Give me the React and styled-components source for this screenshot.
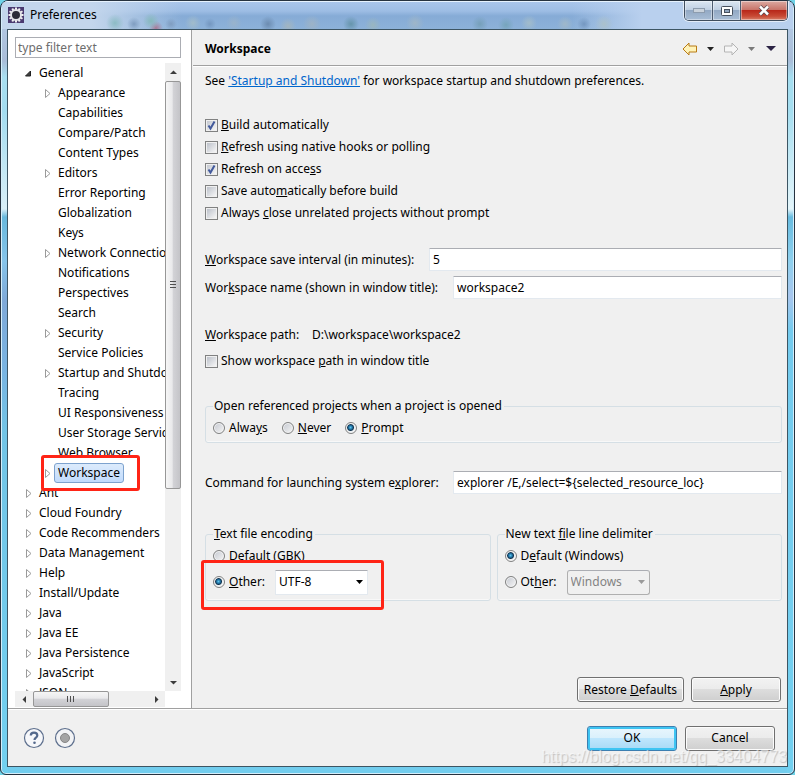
import React from "react";
import styled, { createGlobalStyle } from "styled-components";

const GlobalStyle = createGlobalStyle`
  * {
    box-sizing: border-box;
  }
  body {
    margin: 0;
    background: #6fd3e8;
  }
  body, button, input, select {
    font-family: "Noto Sans", "Noto Sans CJK SC", sans-serif;
    font-size: 12px;
    line-height: 20px;
    color: #000;
  }
`;

const Dialog = styled.div`
  position: relative;
  display: flex;
  flex-direction: column;
  height: 100vh;
  padding: 0 6px 7px;
  border: 1px solid #26323f;
  border-radius: 8px 8px 6px 6px;
  box-shadow: inset 0 0 0 1px #d5eefa;
  overflow: hidden;
  background:
    linear-gradient(to bottom, #b9cfe9 0, #a9bdd8 60px, #a9dff0 76px, #a3dcf0 110px, #d9eff7 208px, #68b8dc 216px, #86c4ea 260px, #7fa9d8 300px, #79b4e2 370px, #72c4e6 430px, #72d0f0 100%) left / 7px 100% no-repeat,
    linear-gradient(to bottom, #b9d0ea 0, #a9bdd8 60px, #a5def0 76px, #a5def0 110px, #e4f5fa 208px, #68bce0 216px, #8ed0ee 260px, #a8c6ee 296px, #74cbee 330px, #72d0f0 100%) right / 7px 100% no-repeat,
    #72cdee;
`;

const TitleBar = styled.header`
  display: flex;
  align-items: flex-start;
  flex: none;
  height: 28px;
  margin: 0 -5px;
  padding-left: 6px;
  border-top: 1px solid #e6f2fd;
  background:
    radial-gradient(circle at 113px 21px, #8cbcc4 0, transparent 9px),
    radial-gradient(circle at 132px 22px, #7f9dc0 0, transparent 7px),
    radial-gradient(circle at 149px 19px, #86b9bc 0, transparent 8px),
    radial-gradient(circle at 154px 26px, #a87c98 0, transparent 7px),
    radial-gradient(circle at 169px 22px, #7f9dc0 0, transparent 6px),
    radial-gradient(circle at 191px 21px, #a2bccb 0, transparent 8px),
    radial-gradient(circle at 208px 22px, #7497c0 0, transparent 6px),
    radial-gradient(circle at 232px 21px, #99b3cb 0, transparent 8px),
    radial-gradient(circle at 266px 22px, #6c8cb0 0, transparent 8px),
    radial-gradient(circle at 286px 24px, #a2b5c0 0, transparent 8px),
    radial-gradient(circle at 310px 22px, #9db3c6 0, transparent 9px),
    radial-gradient(circle at 349px 22px, #6695ac 0, transparent 8px),
    radial-gradient(circle at 371px 23px, #9ab6bf 0, transparent 8px),
    radial-gradient(circle at 413px 21px, #9fb6c8 0, transparent 9px),
    radial-gradient(circle at 478px 22px, #76a0ba 0, transparent 8px),
    radial-gradient(circle at 504px 23px, #76a5bb 0, transparent 8px),
    radial-gradient(circle at 527px 21px, #a2bccb 0, transparent 8px),
    radial-gradient(circle at 563px 22px, #9fb8ca 0, transparent 8px),
    radial-gradient(circle at 582px 22px, #7497c0 0, transparent 7px),
    radial-gradient(circle at 602px 22px, #abc1cb 0, transparent 9px),
    linear-gradient(to right, #c3d6ec 0, #c3d6ec 90px, transparent 180px, transparent 570px, #b9d0ee 640px),
    linear-gradient(to bottom, #a9c5ea 0, #9dbde4 9px, #86abd6 14px, #8db2d9 100%);
`;

const Title = styled.h1`
  flex: 1;
  margin: 0;
  padding: 3px 0 0 6px;
  font-size: 12px;
  font-weight: 400;
`;

const AppIcon = styled.svg`
  flex: none;
  width: 16px;
  height: 16px;
  margin-top: 5px;
`;

const Caption = styled.div`
  display: flex;
  flex: none;
  margin: -1px 5px 0 0;
  border: 1px solid #3f4d5e;
  border-top: 0;
  border-radius: 0 0 5px 5px;
  box-shadow: 0 0 0 1px rgba(255, 255, 255, 0.6);
  overflow: hidden;
`;

const CaptionButton = styled.button`
  display: flex;
  align-items: center;
  justify-content: center;
  width: ${(props) => (props.$close ? "46px" : "28px")};
  height: 19px;
  padding: 0;
  border: 0;
  border-right: ${(props) => (props.$close ? "0" : "1px solid #4d5c70")};
  background: ${(props) =>
    props.$close
      ? "linear-gradient(#dcaaa2 0, #c9756a 45%, #b8281a 50%, #c84a35 80%, #d8806a 100%)"
      : "linear-gradient(#dbe6f2 0, #c0d0e3 45%, #93a9c4 50%, #a9bed6 100%)"};
  box-shadow: inset 0 0 0 1px rgba(255, 255, 255, 0.4);
`;

const Client = styled.main`
  display: flex;
  flex: 1;
  flex-direction: column;
  min-height: 0;
  border: 1px solid #3d5563;
  background: #f0f0f0;
`;

const Columns = styled.div`
  display: flex;
  flex: 1;
  min-height: 0;
  border-bottom: 1px solid #a0a0a0;
`;

const Sidebar = styled.nav`
  display: flex;
  flex: none;
  flex-direction: column;
  width: 184px;
  padding: 7px 10px 1px 7px;
  border-right: 1px solid #a0a0a0;
  background: #fff;
`;

const FilterInput = styled.input`
  flex: none;
  width: 100%;
  height: 21px;
  padding: 0 2px;
  border: 1px solid #abadb3;
  &::placeholder {
    color: #6d6d6d;
    opacity: 1;
  }
`;

const TreeArea = styled.div`
  display: grid;
  flex: 1;
  grid-template-columns: minmax(0, 1fr) 16px;
  grid-template-rows: minmax(0, 1fr) 16px;
  min-height: 0;
  margin-top: 5px;
`;

const Tree = styled.ul`
  margin: 0;
  padding: 0;
  overflow: hidden;
  list-style: none;
`;

const TreeItem = styled.li`
  position: relative;
  display: flex;
  align-items: center;
  height: 20px;
  padding-left: ${(props) => (props.$level ? "29px" : "10px")};
  white-space: nowrap;
`;

const Expander = styled.svg`
  flex: none;
  width: 8px;
  height: 9px;
  margin-right: 2px;
`;

const NodeText = styled.span`
  height: 20px;
  padding: 0 3px;
  border: 1px solid ${(props) => (props.$selected ? "#7da2ce" : "transparent")};
  border-radius: 3px;
  line-height: 18px;
  background: ${(props) => (props.$selected ? "linear-gradient(#dcebfc, #c1dbfc)" : "none")};
`;

const RedBox = styled.div`
  position: absolute;
  z-index: 2;
  top: ${(props) => props.$top};
  left: ${(props) => props.$left};
  width: ${(props) => props.$width};
  height: ${(props) => props.$height};
  border: 3px solid #ff2416;
  border-radius: 3px;
  pointer-events: none;
`;

const ScrollTrack = styled.div`
  display: flex;
  flex-direction: ${(props) => (props.$horizontal ? "row" : "column")};
  background: #f0f0f0;
`;

const ScrollArrow = styled.button`
  display: flex;
  align-items: center;
  justify-content: center;
  flex: none;
  width: ${(props) => (props.$horizontal ? "18px" : "16px")};
  height: ${(props) => (props.$horizontal ? "16px" : "18px")};
  padding: 0;
  border: 0;
  background: none;
`;

const ScrollThumb = styled.div`
  display: flex;
  align-items: center;
  justify-content: center;
  flex: ${(props) => props.$share} 1 0;
  border: 1px solid #979797;
  border-radius: 2px;
  background: linear-gradient(
    ${(props) => (props.$horizontal ? "to bottom" : "to right")},
    #f6f6f6 0,
    #e9e9eb 45%,
    #d3d3d7 50%,
    #c4c4c8 100%
  );
`;

const ScrollRest = styled.div`
  flex: ${(props) => props.$share} 1 0;
`;

const Page = styled.section`
  display: flex;
  flex: 1;
  flex-direction: column;
  min-width: 0;
  margin-left: 1px;
`;

const PageHeader = styled.div`
  display: flex;
  align-items: center;
  justify-content: space-between;
  flex: none;
  height: 36px;
  padding: 2px 9px 0 12px;
  border-bottom: 1px solid #a0a0a0;
  box-shadow: 0 1px 0 #fff;
`;

const PageTitle = styled.h2`
  margin: 0;
  font-size: 12px;
  font-weight: 700;
`;

const NavTools = styled.div`
  display: flex;
  align-items: center;
  gap: 9px;
`;

const ToolButton = styled.button`
  display: flex;
  padding: 0;
  border: 0;
  background: none;
`;

const PageBody = styled.div`
  display: flex;
  flex: 1;
  flex-direction: column;
  min-height: 0;
  padding: 5px 5px 6px 12px;
`;

const Intro = styled.p`
  margin: 0 0 24px;
`;

const Link = styled.a`
  color: #0066cc;
`;

const Stack = styled.div`
  display: flex;
  flex-direction: column;
  gap: 2px;
  margin-bottom: 25px;
`;

const CheckLabel = styled.label`
  display: flex;
  align-items: center;
  gap: 3px;
`;

const CheckInput = styled.input`
  appearance: none;
  flex: none;
  width: 13px;
  height: 13px;
  margin: 0;
  border: 1px solid #808181;
  background: linear-gradient(135deg, #bcc1ca, #f6f6f6) content-box;
  padding: 1px;
  &:checked {
    background:
      url("data:image/svg+xml,%3Csvg xmlns='http://www.w3.org/2000/svg' width='11' height='11'%3E%3Cpath d='M2.5 5.5 4.500 8.500 8.500 1.500' fill='none' stroke='%23435a9c' stroke-width='2'/%3E%3C/svg%3E")
        border-box center / 11px 11px no-repeat,
      linear-gradient(135deg, #c4c8d0, #f6f6f6) content-box;
  }
`;

const RadioInput = styled.input`
  appearance: none;
  flex: none;
  width: 12px;
  height: 12px;
  margin: 0 1px 0 0;
  border: 1px solid #808181;
  border-radius: 50%;
  background: linear-gradient(135deg, #c4c8d0, #f6f6f6);
  box-shadow: inset 0 0 0 1px #f4f4f4;
  &:checked {
    background: radial-gradient(circle at 45% 45%, #5cc6f0 0, #1d6c9c 2px, #12344f 3px, #e8eef2 4px, #f4f4f4 5px);
  }
`;

const Field = styled.div`
  display: flex;
  align-items: center;
  gap: 8px;
  margin-bottom: ${(props) => props.$after || "0"};
`;

const FieldLabel = styled.label`
  flex: none;
  min-width: ${(props) => props.$width};
`;

const TextInput = styled.input`
  flex: 1;
  min-width: 0;
  height: 23px;
  padding: 0 3px;
  border: 1px solid #e3e9ef;
  border-top-color: #abadb3;
  border-radius: 1px;
`;

const PathValue = styled.output`
  white-space: pre;
`;

const Group = styled.fieldset`
  min-width: 0;
  margin: 0 0 ${(props) => props.$after || "0"};
  padding: 1px 7px 3px;
  border: 1px solid #d5dfe5;
  border-radius: 3px;
  box-shadow: inset 0 -1px 0 #f8f8f8;
`;

const Legend = styled.legend`
  padding: 0 2px 0 1px;
  line-height: 20px;
`;

const RadioRow = styled.div`
  position: relative;
  display: flex;
  align-items: center;
  gap: ${(props) => props.$gap || "10px"};
  min-height: ${(props) => (props.$tall ? "30px" : "22px")};
`;

const GroupPair = styled.div`
  display: grid;
  grid-template-columns: 1fr 1fr;
  gap: 6px;
`;

const ComboWrap = styled.div`
  position: relative;
  display: flex;
  align-items: center;
`;

const Combo = styled.select`
  appearance: none;
  width: ${(props) => props.$width};
  height: 25px;
  padding: 0 3px;
  border: 1px solid ${(props) => (props.disabled ? "#afafaf" : "#e3e9ef")};
  border-top-color: #abadb3;
  border-radius: ${(props) => (props.disabled ? "3px" : "1px")};
  background: ${(props) => (props.disabled ? "#f0f0f0" : "#fff")};
  color: ${(props) => (props.disabled ? "#838383" : "#000")};
  opacity: 1;
`;

const ComboArrow = styled.svg`
  position: absolute;
  right: 5px;
  width: 7px;
  height: 4px;
  pointer-events: none;
`;

const ButtonRow = styled.div`
  display: flex;
  justify-content: flex-end;
  gap: 7px;
  margin-top: auto;
  padding-right: 1px;
`;

const PushButton = styled.button`
  min-width: 90px;
  height: 25px;
  padding: 0 6px;
  border: ${(props) => (props.$primary ? "1px solid #3c7fb1" : "1px solid #707070")};
  border-radius: 3px;
  line-height: 20px;
  background: ${(props) =>
    props.$primary
      ? "linear-gradient(#eaf6fd 0, #d9f0fc 50%, #bee6fd 50%, #a7d9f5 100%)"
      : "linear-gradient(#f2f2f2 0, #ebebeb 50%, #dddddd 50%, #cfcfcf 100%)"};
  box-shadow: ${(props) =>
    props.$primary ? "inset 0 0 0 2px #3ec4f2" : "inset 0 0 0 1px #fcfcfc"};
`;

const Footer = styled.footer`
  display: flex;
  align-items: center;
  flex: none;
  gap: 8px;
  height: 57px;
  padding: 0 12px 0 15px;
  border-top: 1px solid #fff;
`;

const RoundButton = styled.button`
  display: flex;
  width: 22px;
  height: 22px;
  margin-right: 1px;
  padding: 0;
  border: 0;
  background: none;
`;

const Spacer = styled.div`
  flex: 1;
`;

const Watermark = styled.div`
  position: absolute;
  z-index: 3;
  right: 7px;
  bottom: 7px;
  font-family: "Liberation Sans", Arial, sans-serif;
  font-size: 16px;
  line-height: 20px;
  color: rgba(255, 255, 255, 0.55);
  text-shadow: 1px 1px 1px rgba(110, 110, 110, 0.35);
  pointer-events: none;
`;

const nodes = [
  { text: "General", open: true },
  { text: "Appearance", level: 1, children: true },
  { text: "Capabilities", level: 1 },
  { text: "Compare/Patch", level: 1 },
  { text: "Content Types", level: 1 },
  { text: "Editors", level: 1, children: true },
  { text: "Error Reporting", level: 1 },
  { text: "Globalization", level: 1 },
  { text: "Keys", level: 1 },
  { text: "Network Connections", level: 1, children: true },
  { text: "Notifications", level: 1 },
  { text: "Perspectives", level: 1 },
  { text: "Search", level: 1 },
  { text: "Security", level: 1, children: true },
  { text: "Service Policies", level: 1 },
  { text: "Startup and Shutdown", level: 1, children: true },
  { text: "Tracing", level: 1 },
  { text: "UI Responsiveness", level: 1 },
  { text: "User Storage Service", level: 1 },
  { text: "Web Browser", level: 1 },
  { text: "Workspace", level: 1, children: true, selected: true },
  { text: "Ant", children: true },
  { text: "Cloud Foundry", children: true },
  { text: "Code Recommenders", children: true },
  { text: "Data Management", children: true },
  { text: "Help", children: true },
  { text: "Install/Update", children: true },
  { text: "Java", children: true },
  { text: "Java EE", children: true },
  { text: "Java Persistence", children: true },
  { text: "JavaScript", children: true },
  { text: "JSON", children: true },
];

const teeth = [0, 30, 60, 90, 120, 150, 180, 210, 240, 270, 300, 330];

function TreeNode({ node }) {
  return (
    <TreeItem $level={node.level}>
      <Expander viewBox="0 0 8 9">
        {node.open && <path d="M5.500 2v5h-5z" fill="#404040" stroke="#222" />}
        {node.children && <path d="M1.500 0.500v8l4.500-4z" fill="#fff" stroke="#9a9a9a" />}
      </Expander>
      <NodeText $selected={node.selected}>{node.text}</NodeText>
      {node.selected && <RedBox $top="-8px" $left="26px" $width="99px" $height="36px" />}
    </TreeItem>
  );
}

function Triangle({ d, fill = "#3c3c3c" }) {
  return (
    <svg width="7" height="7" viewBox="0 0 7 7">
      <path d={d} fill={fill} />
    </svg>
  );
}

function Check({ checked, children }) {
  return (
    <CheckLabel>
      <CheckInput type="checkbox" defaultChecked={checked} />
      <span>{children}</span>
    </CheckLabel>
  );
}

function Radio({ name, checked, children }) {
  return (
    <CheckLabel>
      <RadioInput type="radio" name={name} defaultChecked={checked} />
      <span>{children}</span>
    </CheckLabel>
  );
}

function DropDown({ label, value, width, disabled }) {
  return (
    <ComboWrap>
      <Combo aria-label={label} defaultValue={value} $width={width} disabled={disabled}>
        <option>{value}</option>
      </Combo>
      <ComboArrow viewBox="0 0 7 4">
        <path d="M0 0h7L3.500 4z" fill={disabled ? "#9a9a9a" : "#000"} />
      </ComboArrow>
    </ComboWrap>
  );
}

export default function App() {
  return (
    <Dialog>
      <GlobalStyle />
      <TitleBar>
        <AppIcon viewBox="0 0 16 16">
          <rect width="16" height="16" fill="#4a3a70" />
          {teeth.map((angle) => (
            <rect key={angle} x="7" y="0.500" width="2" height="3" fill="#f2f2f2" transform={`rotate(${angle} 8 8)`} />
          ))}
          <circle cx="8" cy="8" r="5" fill="#2c2c38" stroke="#e4e4e8" strokeWidth="2" />
        </AppIcon>
        <Title>Preferences</Title>
        <Caption>
          <CaptionButton aria-label="Minimize">
            <svg width="12" height="5" viewBox="0 0 12 5">
              <rect x="0.500" y="0.500" width="11" height="4" fill="#c9d2dc" stroke="#8d9cae" />
            </svg>
          </CaptionButton>
          <CaptionButton aria-label="Maximize">
            <svg width="12" height="10" viewBox="0 0 12 10">
              <rect x="0.500" y="0.500" width="11" height="9" rx="1" fill="#fff" stroke="#46505e" />
              <rect x="3.500" y="3.500" width="5" height="3" fill="#8fa4be" stroke="#46505e" />
            </svg>
          </CaptionButton>
          <CaptionButton aria-label="Close" $close>
            <svg width="12" height="11" viewBox="0 0 12 11">
              <path d="M2 1.500 10 9.500M10 1.500 2 9.500" stroke="#5a4a52" strokeWidth="4" />
              <path d="M2 1.500 10 9.500M10 1.500 2 9.500" stroke="#fff" strokeWidth="2.500" />
            </svg>
          </CaptionButton>
        </Caption>
      </TitleBar>
      <Client>
        <Columns>
          <Sidebar>
            <FilterInput aria-label="Filter" placeholder="type filter text" />
            <TreeArea>
              <Tree>
                {nodes.map((node) => (
                  <TreeNode key={node.text} node={node} />
                ))}
              </Tree>
              <ScrollTrack>
                <ScrollArrow aria-label="Scroll up">
                  <Triangle d="M0 5h7L3.500 1.500z" />
                </ScrollArrow>
                <ScrollThumb $share={408}>
                  <svg width="8" height="9" viewBox="0 0 8 9">
                    <path d="M1 1.500h6M1 4.500h6M1 7.500h6" stroke="#4f4f4f" />
                  </svg>
                </ScrollThumb>
                <ScrollRest $share={185} />
                <ScrollArrow aria-label="Scroll down">
                  <Triangle d="M0 2h7L3.500 5.500z" />
                </ScrollArrow>
              </ScrollTrack>
              <ScrollTrack $horizontal>
                <ScrollArrow $horizontal aria-label="Scroll left">
                  <Triangle d="M5 0v7L1.500 3.500z" />
                </ScrollArrow>
                <ScrollThumb $horizontal $share={75}>
                  <svg width="9" height="8" viewBox="0 0 9 8">
                    <path d="M1.500 1v6M4.500 1v6M7.500 1v6" stroke="#4f4f4f" />
                  </svg>
                </ScrollThumb>
                <ScrollRest $share={39} />
                <ScrollArrow $horizontal aria-label="Scroll right">
                  <Triangle d="M2 0v7L5.500 3.500z" />
                </ScrollArrow>
              </ScrollTrack>
            </TreeArea>
          </Sidebar>
          <Page>
            <PageHeader>
              <PageTitle>Workspace</PageTitle>
              <NavTools>
                <ToolButton aria-label="Back">
                  <svg width="16" height="14" viewBox="0 0 16 14">
                    <path d="M1 7 7 1v3h7.500v6H7v3z" fill="#fff3b8" stroke="#b87a14" strokeLinejoin="round" />
                  </svg>
                </ToolButton>
                <ToolButton aria-label="Back history">
                  <Triangle d="M0 2h7L3.500 6z" fill="#222" />
                </ToolButton>
                <ToolButton aria-label="Forward">
                  <svg width="16" height="14" viewBox="0 0 16 14">
                    <path d="M15 7 9 1v3H1.500v6H9v3z" fill="#f6f6f6" stroke="#b4b4b4" strokeLinejoin="round" />
                  </svg>
                </ToolButton>
                <ToolButton aria-label="Forward history">
                  <Triangle d="M0 2h7L3.500 6z" fill="#7a7a7a" />
                </ToolButton>
                <ToolButton aria-label="View menu">
                  <svg width="14" height="7" viewBox="0 0 14 7">
                    <path d="M2 1h10L7 6z" fill="#2b2344" />
                  </svg>
                </ToolButton>
              </NavTools>
            </PageHeader>
            <PageBody>
              <Intro>
                See <Link href="#startup">'Startup and Shutdown'</Link> for workspace startup and shutdown preferences.
              </Intro>
              <Stack>
                <Check checked><u>B</u>uild automatically</Check>
                <Check><u>R</u>efresh using native hooks or polling</Check>
                <Check checked>Refresh on acce<u>s</u>s</Check>
                <Check>Save auto<u>m</u>atically before build</Check>
                <Check>Always <u>c</u>lose unrelated projects without prompt</Check>
              </Stack>
              <Field $after="5px">
                <FieldLabel htmlFor="interval" $width="216px"><u>W</u>orkspace save interval (in minutes):</FieldLabel>
                <TextInput id="interval" defaultValue="5" />
              </Field>
              <Field $after="26px">
                <FieldLabel htmlFor="wsname" $width="240px">Wor<u>k</u>space name (shown in window title):</FieldLabel>
                <TextInput id="wsname" defaultValue="workspace2" />
              </Field>
              <Field $after="6px">
                <FieldLabel htmlFor="wspath" $width="99px"><u>W</u>orkspace path:</FieldLabel>
                <PathValue id="wspath">D:\workspace\workspace2</PathValue>
              </Field>
              <Stack>
                <Check>Show workspace <u>p</u>ath in window title</Check>
              </Stack>
              <Group $after="28px">
                <Legend>Open referenced projects when a project is opened</Legend>
                <RadioRow $gap="14px">
                  <Radio name="open">Alwa<u>y</u>s</Radio>
                  <Radio name="open"><u>N</u>ever</Radio>
                  <Radio name="open" checked><u>P</u>rompt</Radio>
                </RadioRow>
              </Group>
              <Field $after="30px">
                <FieldLabel htmlFor="explorer" $width="240px">Command for launching system e<u>x</u>plorer:</FieldLabel>
                <TextInput id="explorer" defaultValue="explorer /E,/select=${selected_resource_loc}" />
              </Field>
              <GroupPair>
                <Group>
                  <Legend><u>T</u>ext file encoding</Legend>
                  <RadioRow>
                    <Radio name="encoding">Default (GBK)</Radio>
                  </RadioRow>
                  <RadioRow $tall>
                    <Radio name="encoding" checked><u>O</u>ther:</Radio>
                    <DropDown label="Encoding" value="UTF-8" width="93px" />
                    <RedBox $top="-7px" $left="-12px" $width="183px" $height="50px" />
                  </RadioRow>
                </Group>
                <Group>
                  <Legend>New text <u>f</u>ile line delimiter</Legend>
                  <RadioRow>
                    <Radio name="delimiter" checked>D<u>e</u>fault (Windows)</Radio>
                  </RadioRow>
                  <RadioRow $tall>
                    <Radio name="delimiter">Ot<u>h</u>er:</Radio>
                    <DropDown label="Line delimiter" value="Windows" width="83px" disabled />
                  </RadioRow>
                </Group>
              </GroupPair>
              <ButtonRow>
                <PushButton>Restore <u>D</u>efaults</PushButton>
                <PushButton><u>A</u>pply</PushButton>
              </ButtonRow>
            </PageBody>
          </Page>
        </Columns>
        <Footer>
          <RoundButton aria-label="Help">
            <svg width="22" height="22" viewBox="0 0 22 22">
              <circle cx="11" cy="11" r="9.500" fill="#f6f7fa" stroke="#5d6f8d" strokeWidth="1.200" />
              <path d="M7.800 8.600c0-2 1.400-3 3.200-3s3.300 1 3.300 2.800c0 2.200-2.800 2.300-2.800 4.600" fill="none" stroke="#54698c" strokeWidth="2.200" />
              <circle cx="11.500" cy="15.800" r="1.300" fill="#54698c" />
            </svg>
          </RoundButton>
          <RoundButton aria-label="Record">
            <svg width="22" height="22" viewBox="0 0 22 22">
              <circle cx="11" cy="11" r="9.500" fill="#f2f3f5" stroke="#5d6f8d" strokeWidth="1.200" />
              <circle cx="11" cy="11" r="4.500" fill="#a4a4a4" stroke="#868686" />
            </svg>
          </RoundButton>
          <Spacer />
          <PushButton $primary>OK</PushButton>
          <PushButton>Cancel</PushButton>
        </Footer>
      </Client>
      <Watermark>https://blog.csdn.net/qq_33404773</Watermark>
    </Dialog>
  );
}
